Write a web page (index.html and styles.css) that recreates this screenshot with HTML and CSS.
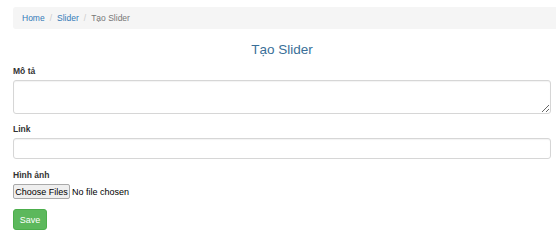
FILE: index.html
```html
<!DOCTYPE html>
<html>
<head>
<meta charset="utf-8">
<link rel="stylesheet" href="styles.css">
</head>
<body>
<div class="page">
  <ol class="breadcrumb">
    <li><a href="#">Home</a></li>
    <li class="sep">/</li>
    <li><a href="#">Slider</a></li>
    <li class="sep">/</li>
    <li class="active">Tạo Slider</li>
  </ol>
  <form class="form">
    <h3 class="title">Tạo Slider</h3>
    <div class="group g1">
      <label class="label">Mô tả</label>
      <textarea class="control area"></textarea>
    </div>
    <div class="group g2">
      <label class="label">Link</label>
      <input class="control input" type="text">
    </div>
    <div class="group g3">
      <label class="label">Hình ảnh</label>
      <div class="file">
        <span class="file-btn">Choose Files</span>
        <span class="file-text">No file chosen</span>
      </div>
    </div>
    <button type="button" class="btn-save">Save</button>
  </form>
</div>
</body>
</html>
```
FILE: styles.css
```css
html, body {
  margin: 0;
  padding: 0;
  background: #fff;
}
body {
  font-family: "Liberation Sans", Arial, sans-serif;
  color: #333;
  font-size: 9px;
}
.page {
  padding: 7px 0 0 13px;
}
.breadcrumb {
  list-style: none;
  margin: 0;
  padding: 0 9px;
  height: 22px;
  display: flex;
  align-items: center;
  gap: 5px;
  background: #f5f5f5;
  border-radius: 3px 0 0 3px;
  font-size: 8.5px;
}
.breadcrumb a {
  color: #337ab7;
  text-decoration: none;
}
.breadcrumb .sep {
  color: #ccc;
}
.breadcrumb .active {
  color: #777;
}
.form {
  padding-right: 5px;
}
.title {
  margin: 12px 0 7px;
  text-align: center;
  font-weight: normal;
  font-size: 13.5px;
  line-height: 18px;
  color: #3a6f98;
}
.group {
  margin-bottom: 10px;
}
.g2 {
  margin-bottom: 11px;
}
.label {
  display: block;
  font-weight: bold;
  font-size: 8.5px;
  line-height: 10px;
  margin-bottom: 4px;
  color: #333;
}
.control {
  display: block;
  box-sizing: border-box;
  width: 100%;
  margin: 0;
  border: 1px solid #d6d6d6;
  border-radius: 3px;
  background: #fff;
  box-shadow: inset 0 1px 1px rgba(0,0,0,.05);
  font-family: inherit;
}
.area {
  height: 34px;
  resize: vertical;
}
.input {
  height: 21px;
}
.file {
  display: flex;
  align-items: center;
  gap: 2px;
  height: 15px;
}
.file-btn {
  box-sizing: border-box;
  height: 15px;
  width: 57px;
  display: flex;
  align-items: center;
  justify-content: center;
  border: 1px solid #a9a9a9;
  border-radius: 2px;
  background: #efefef;
  color: #000;
  font-size: 9px;
}
.file-text {
  color: #000;
  font-size: 9px;
}
.btn-save {
  display: block;
  margin-top: 3px;
  box-sizing: border-box;
  width: 34px;
  height: 21px;
  padding: 0;
  border: 1px solid #4cae4c;
  border-radius: 3px;
  background: #5cb85c;
  color: #fff;
  font-family: inherit;
  font-size: 9px;
}
```
